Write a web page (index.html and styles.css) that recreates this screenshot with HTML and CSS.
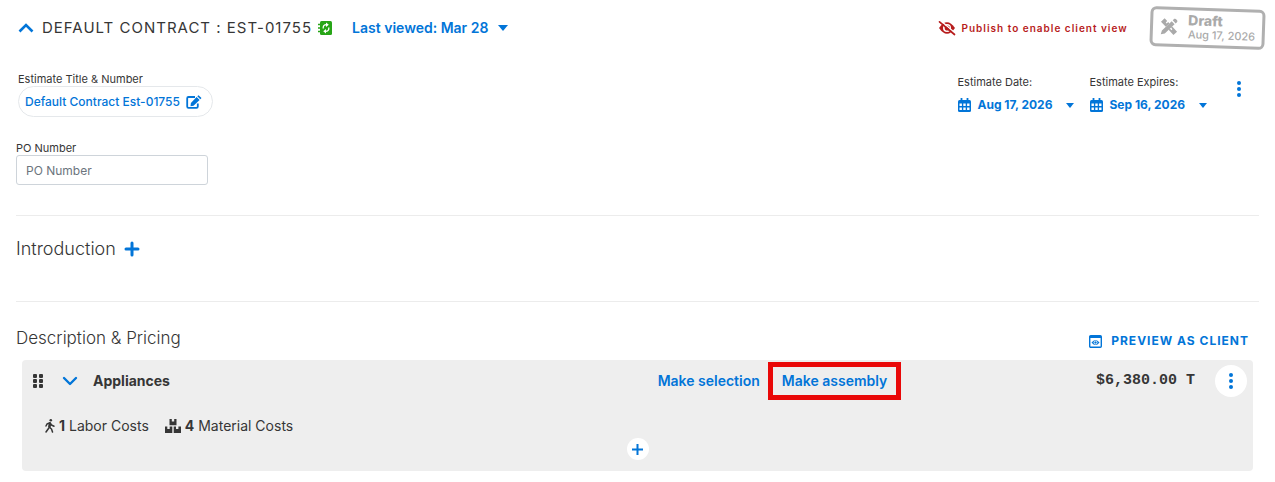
FILE: index.html
```html
<!DOCTYPE html>
<html lang="en">
<head>
  <meta charset="UTF-8">
  <meta name="viewport" content="width=device-width, initial-scale=1">
  <title>Default Contract : Est-01755</title>
  <link rel="stylesheet" href="styles.css">
</head>
<body>
  <header class="topbar">
    <button type="button" class="toggle" aria-label="Collapse estimate">
      <svg width="16" height="16" viewBox="0 0 16 16"><path d="M1.500 11.500L8 5l6.500 6.500" fill="none" stroke="currentColor" stroke-width="2.600"/></svg>
    </button>
    <h1 class="title">Default Contract : Est-01755</h1>
    <svg class="sync" width="16" height="16" viewBox="0 0 16 16">
      <rect x="2" y="1" width="12" height="14" rx="1.500" fill="#27a517"/>
      <path d="M0 4.500h3M0 8h3M0 11.500h3" stroke="#27a517" stroke-width="1.400"/>
      <path d="M5.200 8.500Q4.800 4.700 8.500 4.700M10.800 7.500Q11.200 11.300 7.500 11.300" fill="none" stroke="#fff" stroke-width="1.300"/>
      <path d="M8 2.500l2.800 2.200L8 7zM8 9l-2.800 2.300L8 13.500z" fill="#fff"/>
    </svg>
    <button type="button" class="viewed">Last viewed: Mar 28
      <svg width="10" height="6" viewBox="0 0 10 6"><path d="M0 0h10L5 6z" fill="currentColor"/></svg>
    </button>

    <div class="publish">
      <svg width="18" height="16" viewBox="0 0 18 16">
        <path d="M1 8Q9-3.500 17 8Q9 19.500 1 8z" fill="currentColor"/>
        <circle cx="9" cy="8" r="4" fill="#fff"/>
        <circle cx="9.300" cy="8" r="2.600" fill="currentColor"/>
        <path d="M2.500 .5L17 13" stroke="#fff" stroke-width="1.500"/>
        <path d="M1.500 1.800L16.500 14.500" stroke="currentColor" stroke-width="1.700" stroke-linecap="round"/>
      </svg>
      Publish to enable client view
    </div>

    <div class="stamp">
      <svg width="18" height="18" viewBox="0 0 18 18" fill="currentColor">
        <path d="M4.300 .8L7 3.500 5.600 4.900 6.600 5.900 8 4.500 9.300 5.800 5.800 9.300 .8 4.300zM12.200 8.700L17.200 13.700 13.700 17.200 8.700 12.200 10 10.900 11.500 12.400 12.500 11.400 11 9.900z"/>
        <path d="M11.500 3.500L14.500 6.500 5 16 1 17 2 13zM12.500 2.500L14 1Q14.800.5 15.600 1.200L16.800 2.400Q17.500 3.200 17 4L15.500 5.500z"/>
      </svg>
      <div>
        <strong class="stamp-status">Draft</strong>
        <span class="stamp-date">Aug 17, 2026</span>
      </div>
    </div>
  </header>

  <main>
    <section class="details">
      <div>
        <div class="name">
          <span class="label">Estimate Title &amp; Number</span>
          <button type="button" class="pill">Default Contract Est-01755
            <svg width="16" height="14" viewBox="0 0 16 14">
              <path d="M9 2H2.500Q1.200 2 1.200 3.300V11.500Q1.200 12.800 2.500 12.800H10.500Q11.800 12.800 11.800 11.500V8.500" fill="none" stroke="currentColor" stroke-width="1.800"/>
              <path d="M10.600 2L13.600 5 7.500 10.800 4.500 11.200 4.900 8zM11.300 1.300L12.500.2 15.500 3.100 14.300 4.300z" fill="currentColor"/>
            </svg>
          </button>
        </div>
        <label class="label" for="po">PO Number</label>
        <input type="text" class="po" id="po" placeholder="PO Number">
      </div>

      <div class="dates">
        <div>
          <span class="label">Estimate Date:</span>
          <button type="button" class="date">
            <svg width="13" height="14" viewBox="0 0 13 14"><path d="M3.500 0v3M9.500 0v3" stroke="currentColor" stroke-width="1.800"/><path d="M1.500 2h10Q13 2 13 3.500v9Q13 14 11.500 14h-10Q0 14 0 12.500v-9Q0 2 1.500 2z" fill="currentColor"/><path d="M1.500 5.500h2.400v2.500H1.500zM5.300 5.500h2.400v2.500H5.300zM9.100 5.500h2.400v2.500H9.100zM1.500 9.500h2.400v2.500H1.500zM5.300 9.500h2.400v2.500H5.300zM9.100 9.500h2.400v2.500H9.100z" fill="#fff"/></svg>
            <span>Aug 17, 2026</span>
            <svg width="8" height="5" viewBox="0 0 8 5"><path d="M0 0h8L4 5z" fill="currentColor"/></svg>
          </button>
        </div>
        <div>
          <span class="label">Estimate Expires:</span>
          <button type="button" class="date">
            <svg width="13" height="14" viewBox="0 0 13 14"><path d="M3.500 0v3M9.500 0v3" stroke="currentColor" stroke-width="1.800"/><path d="M1.500 2h10Q13 2 13 3.500v9Q13 14 11.500 14h-10Q0 14 0 12.500v-9Q0 2 1.500 2z" fill="currentColor"/><path d="M1.500 5.500h2.400v2.500H1.500zM5.300 5.500h2.400v2.500H5.300zM9.100 5.500h2.400v2.500H9.100zM1.500 9.500h2.400v2.500H1.500zM5.300 9.500h2.400v2.500H5.300zM9.100 9.500h2.400v2.500H9.100z" fill="#fff"/></svg>
            <span>Sep 16, 2026</span>
            <svg width="8" height="5" viewBox="0 0 8 5"><path d="M0 0h8L4 5z" fill="currentColor"/></svg>
          </button>
        </div>
        <button type="button" class="menu" aria-label="Estimate options">
          <svg width="4" height="16" viewBox="0 0 4 16" fill="currentColor"><circle cx="2" cy="2" r="2"/><circle cx="2" cy="8" r="2"/><circle cx="2" cy="14" r="2"/></svg>
        </button>
      </div>
    </section>

    <section class="intro">
      <h2>Introduction</h2>
      <button type="button" aria-label="Add introduction">
        <svg width="16" height="16" viewBox="0 0 16 16"><path d="M8 2v12M2 8h12" stroke="currentColor" stroke-width="3" stroke-linecap="round"/></svg>
      </button>
    </section>

    <section class="pricing">
      <div class="pricing-head">
        <h2>Description &amp; Pricing</h2>
        <button type="button" class="preview">
          <svg width="13" height="13" viewBox="0 0 13 13"><rect x=".7" y=".7" width="11.600" height="11.600" rx="1" fill="none" stroke="currentColor" stroke-width="1.400"/><path d="M1 1h11v2H1z" fill="currentColor"/><path d="M2.500 7.500Q6.500 2.500 10.500 7.500Q6.500 12.500 2.500 7.500z" fill="currentColor"/><circle cx="6.500" cy="7.500" r="1.500" fill="none" stroke="#fff" stroke-width=".9"/></svg>
          Preview as client
        </button>
      </div>

      <article class="item">
        <div class="item-row">
          <svg class="grip" width="10" height="14" viewBox="0 0 10 14" fill="currentColor"><rect width="4" height="4" rx="1"/><rect x="6" width="4" height="4" rx="1"/><rect y="5" width="4" height="4" rx="1"/><rect x="6" y="5" width="4" height="4" rx="1"/><rect y="10" width="4" height="4" rx="1"/><rect x="6" y="10" width="4" height="4" rx="1"/></svg>
          <button type="button" aria-label="Expand Appliances">
            <svg width="16" height="16" viewBox="0 0 16 16"><path d="M2 5l6 6 6-6" fill="none" stroke="currentColor" stroke-width="2.400" stroke-linecap="round" stroke-linejoin="round"/></svg>
          </button>
          <h3>Appliances</h3>
          <div class="actions">
            <button type="button" class="action">Make selection</button>
            <button type="button" class="action marked">Make assembly</button>
          </div>
          <span class="price">$6,380.00 T</span>
          <button type="button" class="menu round" aria-label="Appliances options">
            <svg width="4" height="16" viewBox="0 0 4 16" fill="currentColor"><circle cx="2" cy="2" r="2"/><circle cx="2" cy="8" r="2"/><circle cx="2" cy="14" r="2"/></svg>
          </button>
        </div>
        <div class="costs">
          <span class="cost">
            <svg width="10" height="14" viewBox="0 0 10 14" fill="none" stroke="currentColor" stroke-width="1.500" stroke-linecap="round" stroke-linejoin="round"><circle cx="5.800" cy="1.300" r="1.300" fill="currentColor" stroke="none"/><path d="M1 7L2 5 5 3.800 6.500 6 9 7.200M5 4L4 8 6.500 10 7.500 13M3.500 9.500L1 13"/><path d="M5 4.500L4.500 8" stroke-width="2.400"/></svg>
            <span><b>1</b> Labor Costs</span>
          </span>
          <span class="cost">
            <svg width="16" height="14" viewBox="0 0 16 14" fill="currentColor"><path d="M4.500 0h2.300v2.500h2.400V0h2.300v6.300h-7zM0 7.500h2.300V10h2.400V7.500H7.300V14H0zM8.700 7.500H11V10h2.400V7.500H16V14H8.700z"/></svg>
            <span><b>4</b> Material Costs</span>
          </span>
        </div>
        <button type="button" class="add" aria-label="Add item">
          <svg width="11" height="11" viewBox="0 0 11 11"><path d="M5.500 0v11M0 5.500h11" stroke="currentColor" stroke-width="2"/></svg>
        </button>
      </article>
    </section>
  </main>
</body>
</html>
```
FILE: styles.css
```css
* {
  box-sizing: border-box;
}

body {
  margin: 0;
  padding: 0 16px;
  font-family: Inter, "Open Sans", sans-serif;
  font-size: 14px;
  line-height: 20px;
  color: #363636;
  background: #fff;
}

h1, h2, h3 {
  margin: 0;
}

button {
  display: flex;
  align-items: center;
  padding: 0;
  border: 0;
  background: none;
  font: inherit;
  color: #0275d8;
  white-space: nowrap;
  cursor: pointer;
}

svg {
  display: block;
  flex: none;
}

h2 {
  font-size: 17px;
  font-weight: 300;
  line-height: 24px;
}

.topbar {
  display: flex;
  align-items: center;
  height: 56px;
  padding-left: 2px;
  margin-right: -6px;
}

.title {
  margin-left: 8px;
  font-size: 15px;
  font-weight: 400;
  letter-spacing: 1px;
  text-transform: uppercase;
}

.sync {
  margin-left: 6px;
}

.viewed {
  margin-left: 18px;
  gap: 10px;
  font-weight: 600;
}

.publish {
  display: flex;
  align-items: center;
  gap: 6px;
  margin-left: auto;
  font-size: 10px;
  font-weight: 600;
  letter-spacing: 1px;
  color: #b71c1c;
}

.stamp {
  display: flex;
  align-items: center;
  gap: 10px;
  height: 40px;
  margin-left: 22px;
  padding: 0 7px;
  border: 3px solid #b0b0b0;
  border-radius: 6px;
  font-size: 11px;
  font-weight: 500;
  line-height: 14px;
  color: #aaa;
  transform: rotate(2deg);
}

.stamp-status {
  display: block;
  font-size: 14px;
  font-weight: 800;
}

.details {
  display: flex;
  justify-content: space-between;
  padding: 16px 0 30px;
  border-bottom: 1px solid #ececec;
}

.label {
  display: block;
  font-size: 11px;
  line-height: 14px;
}

.name {
  margin: 0 0 24px 2px;
}

.pill {
  gap: 6px;
  height: 31px;
  padding: 0 10px 0 6px;
  border: 1px solid #e5e8eb;
  border-radius: 16px;
  font-size: 12px;
  font-weight: 500;
}

.po {
  display: block;
  width: 192px;
  height: 30px;
  padding: 0 9px;
  border: 1px solid #ced4da;
  border-radius: 3px;
  font: inherit;
  font-size: 12px;
}

.po::placeholder {
  color: #6c757d;
}

.dates {
  display: flex;
  align-items: flex-start;
  gap: 15px;
  padding: 3px 18px 0 0;
}

.date {
  gap: 6px;
  height: 32px;
  padding-left: 1px;
  font-size: 12px;
  font-weight: 700;
}

.date span {
  margin-right: 8px;
}

.menu {
  justify-content: center;
  height: 28px;
}

.dates .menu {
  margin-left: 15px;
}

.intro {
  display: flex;
  align-items: flex-start;
  gap: 8px;
  height: 86px;
  padding-top: 21px;
  border-bottom: 1px solid #ececec;
}

.intro h2 {
  font-size: 18px;
}

.intro button {
  height: 24px;
}

.pricing {
  padding-top: 24px;
}

.pricing-head {
  display: flex;
  justify-content: space-between;
  padding-right: 10px;
}

.preview {
  gap: 9px;
  padding-top: 5px;
  font-size: 12px;
  font-weight: 700;
  letter-spacing: 1px;
  text-transform: uppercase;
}

.item {
  margin: 9px 6px 11px;
  padding: 2px 6px 11px;
  border-radius: 4px;
  background: #eee;
}

.item-row {
  display: grid;
  grid-template-columns: 29px 31px 9fr auto 5fr auto;
  align-items: center;
  padding-left: 5px;
}

h3 {
  font-size: 14px;
  font-weight: 700;
}

.actions {
  display: flex;
  align-items: center;
  gap: 8px;
}

.action {
  font-weight: 600;
}

.marked {
  height: 38px;
  padding: 0 9px;
  border: 5px solid #e90808;
}

.price {
  padding-right: 20px;
  font-family: "Liberation Mono", monospace;
  font-size: 15px;
  font-weight: 700;
  text-align: right;
}

.round {
  width: 32px;
  height: 32px;
  border-radius: 50%;
  background: #fff;
}

.costs {
  display: flex;
  gap: 16px;
  padding: 16px 0 0 17px;
}

.cost {
  display: flex;
  align-items: center;
  gap: 4px;
}

.add {
  justify-content: center;
  width: 22px;
  height: 22px;
  margin: 2px auto 0;
  border-radius: 50%;
  background: #fff;
}
```
